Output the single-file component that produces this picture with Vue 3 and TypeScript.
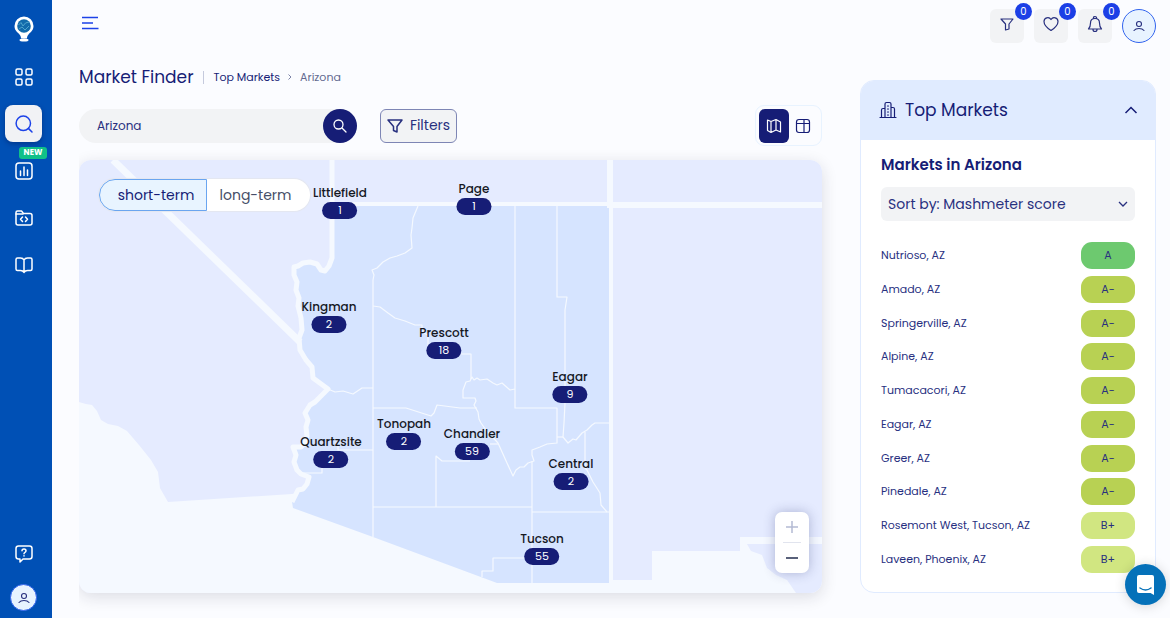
<script setup lang="ts">
import { computed, ref } from 'vue'

interface NavItem {
  label: string
  paths: string[]
  active?: boolean
  badge?: string
}

interface Pin {
  name: string
  count: number
  x: number
  y: number
}

interface Market {
  name: string
  grade: string
}

const nav: NavItem[] = [
  {
    label: 'Dashboard',
    paths: ['M2 3.5Q2 2 3.5 2H6.5Q8 2 8 3.5V6.5Q8 8 6.5 8H3.5Q2 8 2 6.5Z', 'M12 3.5Q12 2 13.5 2H16.5Q18 2 18 3.5V6.5Q18 8 16.5 8H13.5Q12 8 12 6.5Z', 'M2 13.5Q2 12 3.5 12H6.5Q8 12 8 13.5V16.5Q8 18 6.5 18H3.5Q2 18 2 16.5Z', 'M12 13.5Q12 12 13.5 12H16.5Q18 12 18 13.5V16.5Q18 18 16.5 18H13.5Q12 18 12 16.5Z'],
  },
  { label: 'Search', active: true, paths: ['M16.5 9.3a7.2 7.2 0 1 1-14.4 0a7.2 7.2 0 0 1 14.4 0', 'M14.6 14.6L18 18'] },
  { label: 'Analytics', badge: 'NEW', paths: ['M5 2H15Q18 2 18 5V15Q18 18 15 18H5Q2 18 2 15V5Q2 2 5 2Z', 'M6.5 10V14.5', 'M10 6V14.5', 'M13.5 9V14.5'] },
  { label: 'Projects', paths: ['M2 15V4.5Q2 3 3.5 3H7.5L9.5 5.5H16Q18 5.5 18 7.5V15Q18 17 16 17H4Q2 17 2 15Z', 'M2 6H9', 'M8.5 9L6.5 11.2L8.5 13.4', 'M11.5 9L13.5 11.2L11.5 13.4'] },
  { label: 'Guides', paths: ['M10 5Q9 3 6.5 3H3.5Q2 3 2 4.5V14Q2 15.5 3.5 15.5H6.5Q9 15.5 10 17.5Q11 15.5 13.5 15.5H16.5Q18 15.5 18 14V4.5Q18 3 16.5 3H13.5Q11 3 10 5V17'] },
]

const mapBox = { x: 79, y: 160, width: 743, height: 433 }

const pins: Pin[] = [
  { name: 'Littlefield', count: 1, x: 340, y: 219 },
  { name: 'Page', count: 1, x: 474, y: 215 },
  { name: 'Kingman', count: 2, x: 329, y: 333 },
  { name: 'Prescott', count: 18, x: 444, y: 359 },
  { name: 'Eagar', count: 9, x: 570, y: 403 },
  { name: 'Tonopah', count: 2, x: 404, y: 450 },
  { name: 'Chandler', count: 59, x: 472, y: 460 },
  { name: 'Quartzsite', count: 2, x: 331, y: 468 },
  { name: 'Central', count: 2, x: 571, y: 490 },
  { name: 'Tucson', count: 55, x: 542, y: 565 },
]

const placedPins = computed(() =>
  pins.map((pin) => ({
    ...pin,
    style: {
      left: `${((pin.x - mapBox.x) / mapBox.width) * 100}%`,
      top: `${((pin.y - mapBox.y) / mapBox.height) * 100}%`,
    },
  })),
)

const arizona =
  'M333 205L332 258L329 266L325 272L321 271L317 264L310 262L303 263L298 266L293 267L294 275L297 282L296 290L299 298L298 306L301 318L302 330L300 340L300 350L306 360L312 367L313 378L328 389L321 396L315 402L310 405L305 413L308 420L307 427L307 436L305 443L301 447L293 447L296 455L294 462L297 470L301 474L309 477L308 484L304 488L298 489L292 502L293 508L373 537L497 583H610V205Z'

const stateBorder =
  'M332 160V258L329 266L325 271L321 270L317 264L310 262L303 263L298 266L294 267L294 275L297 282L296 290L299 298L298 306L301 318L302 330L299 338L300 350L306 360L312 367L313 378L328 389L321 396L315 402L310 405L305 413L308 420L306 427L307 436L305 443L301 447L293 447L296 455L294 462L297 470L301 474L309 477L307 484L303 489L298 490L292 502'

const counties = [
  'M418 206L413 218L412 228L411 235L412 248L405 253L397 256L390 258L383 262L377 268L372 270L374 275L373 280V537',
  'M373 306L380 307L388 313L395 318L405 321L415 325H422V332L428 335V350L462 354H471V379',
  'M515 389L510 390L502 383L497 385L493 383L487 379L480 380L477 378L474 380L472 377L470 381L466 382L463 390V398H475L476 401L474 405L478 412L479 419L481 423L486 430L498 443L507 463L513 476L516 470L520 467L524 467L528 463L534 461L532 455V450L540 447L547 444L557 443V408H515V206',
  'M557 206V297H567L565 310V403L564 423L563 437L568 443L573 439L576 440L582 433L587 430L592 425L595 423H610',
  'M557 437H563',
  'M585 432V468L587 470L593 482L600 493L601 505L607 512',
  'M532 461V583',
  'M532 512H610',
  'M373 507H532',
  'M436 507V456L442 461H470',
  'M373 408H406L431 416L434 413L437 405L460 408H477',
  'M490 444H498',
  'M328 389L335 392L343 391L353 394L362 388H373',
  'M373 450H338V443',
  'M322 465V473H297',
  'M482 577V571H493V558H532',
]

const markets: Market[] = [
  { name: 'Nutrioso, AZ', grade: 'A' },
  { name: 'Amado, AZ', grade: 'A-' },
  { name: 'Springerville, AZ', grade: 'A-' },
  { name: 'Alpine, AZ', grade: 'A-' },
  { name: 'Tumacacori, AZ', grade: 'A-' },
  { name: 'Eagar, AZ', grade: 'A-' },
  { name: 'Greer, AZ', grade: 'A-' },
  { name: 'Pinedale, AZ', grade: 'A-' },
  { name: 'Rosemont West, Tucson, AZ', grade: 'B+' },
  { name: 'Laveen, Phoenix, AZ', grade: 'B+' },
]

const gradeClass: Record<string, string> = { A: 'top', 'A-': 'high', 'B+': 'good' }

const query = ref('Arizona')
const term = ref<'short' | 'long'>('short')
const view = ref<'map' | 'table'>('map')
const panelOpen = ref(true)
</script>

<template>
  <div class="app">
    <aside class="sidebar">
      <a class="logo" href="#" aria-label="Home">
        <svg width="20" height="26" viewBox="0 0 20 26">
          <path d="M10 0.5a9.5 9.5 0 0 1 9.5 9.5c0 4.500-3 6-5 8.500c-1.200 1.500-1.500 2.500-1.500 4H7c0-1.500-.3-2.500-1.500-4C3.500 16 .5 14.500 .5 10A9.5 9.5 0 0 1 10 .5Z" fill="#fff" />
          <ellipse cx="10" cy="24" rx="4.5" ry="1.5" fill="#fff" />
          <circle cx="10" cy="10" r="6.8" fill="#126bab" />
          <path d="M4.500 9L7 6.500L9 10L11.500 7L15 6M5 13L8 11L11 14L15 10" fill="none" stroke="#4fa5cc" stroke-width="1" />
        </svg>
      </a>
      <nav class="nav" aria-label="Main">
        <a v-for="item in nav" :key="item.label" class="nav-item" :class="{ active: item.active }" href="#" :aria-label="item.label">
          <svg class="line-icon" width="20" height="20" viewBox="0 0 20 20">
            <path v-for="d in item.paths" :key="d" :d="d" />
          </svg>
          <span v-if="item.badge" class="new-badge">{{ item.badge }}</span>
        </a>
      </nav>
      <div class="sidebar-foot">
        <a class="nav-item" href="#" aria-label="Help">
          <svg class="line-icon" width="20" height="20" viewBox="0 0 20 20">
            <path d="M4.5 2H15.5Q18 2 18 4.5V12.5Q18 15 15.5 15H9L6 18V15H4.5Q2 15 2 12.5V4.5Q2 2 4.5 2Z" />
            <path d="M8 6.8Q8 5 10 5T12 6.8Q12 7.800 11 8.3T10 9.8M10 11.8V12" />
          </svg>
        </a>
        <button class="avatar small" type="button" aria-label="Account">
          <svg class="line-icon" width="14" height="14" viewBox="0 0 14 14">
            <circle cx="7" cy="5" r="2.5" />
            <path d="M2 11.500Q3.500 9.500 7 9.500T12 11.500" />
          </svg>
        </button>
      </div>
    </aside>

    <div class="content">
      <header class="topbar">
        <button class="menu" type="button" aria-label="Toggle menu">
          <svg width="18" height="14" viewBox="0 0 18 14" fill="none" stroke="#1c42e8" stroke-width="1.6">
            <path d="M1 1.500H17M1 7H12M1 12.500H17.500" />
          </svg>
        </button>
        <div class="actions">
          <button class="action" type="button" aria-label="Saved filters">
            <svg class="line-icon" width="16" height="16" viewBox="0 0 16 16"><path d="M2 3H14L10 8V13L6.5 14V8Z" /></svg>
            <span class="count">0</span>
          </button>
          <button class="action" type="button" aria-label="Favorites">
            <svg class="line-icon" width="18" height="18" viewBox="0 0 18 18"><path d="M9 15.500Q2 11 2 6.500A3.8 3.8 0 0 1 9 4.500A3.8 3.8 0 0 1 16 6.500Q16 11 9 15.500Z" /></svg>
            <span class="count">0</span>
          </button>
          <button class="action" type="button" aria-label="Notifications">
            <svg class="line-icon" width="18" height="18" viewBox="0 0 18 18"><path d="M2.5 14Q4.5 12 4.5 8Q4.5 3.500 9 3.500T13.500 8Q13.500 12 15.500 14ZM7.500 3.500V2.500Q7.500 1.500 9 1.500T10.500 2.500V3.500M7 14.500Q7 16.500 9 16.500T11 14.500" /></svg>
            <span class="count">0</span>
          </button>
          <button class="avatar" type="button" aria-label="Account">
            <svg class="line-icon" width="14" height="14" viewBox="0 0 14 14">
              <circle cx="7" cy="5" r="2.5" />
              <path d="M2 11.500Q3.500 9.500 7 9.500T12 11.500" />
            </svg>
          </button>
        </div>
      </header>

      <div class="columns">
        <main class="finder">
          <div class="heading">
            <h1>Market Finder</h1>
            <nav class="crumbs" aria-label="Breadcrumb">
              <a href="#">Top Markets</a>
              <svg width="4" height="6" viewBox="0 0 4 6" fill="none" stroke="#7d84a8"><path d="M.5 .5L3 3L.5 5.500" /></svg>
              <span>Arizona</span>
            </nav>
          </div>

          <div class="toolbar">
            <form class="search" @submit.prevent>
              <input v-model="query" type="text" aria-label="Search markets" />
              <button type="submit" aria-label="Search">
                <svg width="16" height="16" viewBox="0 0 16 16" fill="none" stroke="#fff" stroke-width="1.3" stroke-linecap="round">
                  <circle cx="6.5" cy="6.5" r="4.5" />
                  <path d="M10 10L14 14" />
                </svg>
              </button>
            </form>
            <button class="filters" type="button">
              <svg class="line-icon" width="16" height="16" viewBox="0 0 16 16"><path d="M1 2H15L10 8.500V14L6.500 12.500V8.500Z" /></svg>
              Filters
            </button>
            <div class="views">
              <button type="button" aria-label="Map view" :class="{ on: view === 'map' }" @click="view = 'map'">
                <svg class="line-icon" width="16" height="16" viewBox="0 0 16 16"><path d="M1.500 2L5 3.500L10 1.500L14.500 4V14L10 12L5 14.500L1.500 12.500ZM5 3.500V14.500M10 1.500V12" /></svg>
              </button>
              <button type="button" aria-label="Table view" :class="{ on: view === 'table' }" @click="view = 'table'">
                <svg class="line-icon" width="16" height="16" viewBox="0 0 16 16"><path d="M4 1.500H12Q14.500 1.500 14.500 4V12Q14.500 14.500 12 14.500H4Q1.500 14.500 1.500 12V4Q1.500 1.500 4 1.500ZM1.500 5.500H14.500M9 1.500V14.500" /></svg>
              </button>
            </div>
          </div>

          <section class="map" aria-label="Market map">
            <svg class="map-art" viewBox="79 160 743 433" preserveAspectRatio="none">
              <rect x="79" y="160" width="743" height="433" fill="#e5ebff" />
              <path d="M79 402L86 404L92 405L97 411L101 420L108 424L118 426L127 431L139 445L151 460L158 472L160 488L168 502L292 494L400 480H613V580H652V551H740V537H822V544H747L751 551L762 555L767 568L776 575L787 580L796 593H79Z" fill="#f5f9ff" />
              <path :d="arizona" fill="#d6e4ff" />
              <path d="M113 160L300 342" stroke="#f5f9ff" stroke-width="7" fill="none" />
              <path :d="stateBorder" stroke="#f5f9ff" stroke-width="5" stroke-linejoin="round" fill="none" />
              <path d="M335 204H610M611 583V206" stroke="#f5f9ff" stroke-width="4" fill="none" />
              <path d="M610 160V208M607 205H822" stroke="#f5f9ff" stroke-width="6" fill="none" />
              <path v-for="d in counties" :key="d" :d="d" stroke="#f5f9ff" stroke-width="1.2" stroke-linejoin="round" fill="none" />
            </svg>

            <div v-for="pin in placedPins" :key="pin.name" class="pin" :style="pin.style">
              <span class="pin-name">{{ pin.name }}</span>
              <button class="pin-count" type="button" :aria-label="`${pin.count} markets near ${pin.name}`">{{ pin.count }}</button>
            </div>

            <div class="terms">
              <button type="button" :class="{ on: term === 'short' }" @click="term = 'short'">short-term</button>
              <button type="button" :class="{ on: term === 'long' }" @click="term = 'long'">long-term</button>
            </div>

            <div class="zoom">
              <button type="button" aria-label="Zoom in">
                <svg width="14" height="14" viewBox="0 0 14 14" stroke="#b4bad3" stroke-width="1.5"><path d="M1 7H13M7 1V13" /></svg>
              </button>
              <button type="button" aria-label="Zoom out">
                <svg width="14" height="14" viewBox="0 0 14 14" stroke="#59617a" stroke-width="2"><path d="M1 7H13" /></svg>
              </button>
            </div>
          </section>
        </main>

        <section class="panel">
          <h2>
            <button class="panel-head" type="button" :aria-expanded="panelOpen" @click="panelOpen = !panelOpen">
              <svg class="line-icon" width="18" height="18" viewBox="0 0 18 18"><path d="M1 16.500H17M6 16.500V3Q6 1.500 7.500 1.500H10.500Q12 1.500 12 3V16.500M6 7.500H4Q2.500 7.500 2.500 9V16.500M12 6.500H14Q15.500 6.500 15.500 8V16.500M8.500 5H9.500M8.500 8H9.500M8.500 11H9.500M8.500 14H9.500" /></svg>
              <span>Top Markets</span>
              <svg class="chevron" width="14" height="8" viewBox="0 0 14 8"><path d="M1.500 7L7 1.500L12.500 7" /></svg>
            </button>
          </h2>
          <div v-if="panelOpen" class="panel-body">
            <h3>Markets in Arizona</h3>
            <div class="sort">
              <select aria-label="Sort markets">
                <option>Sort by: Mashmeter score</option>
              </select>
              <svg width="10" height="6" viewBox="0 0 10 6"><path d="M1 1L5 5L9 1" /></svg>
            </div>
            <ul class="markets">
              <li v-for="market in markets" :key="market.name">
                <span>{{ market.name }}</span>
                <span class="grade" :class="gradeClass[market.grade]">{{ market.grade }}</span>
              </li>
            </ul>
          </div>
        </section>
      </div>
    </div>

    <button class="chat" type="button" aria-label="Open chat">
      <svg width="20" height="22" viewBox="0 0 20 22">
        <path d="M3 1H16Q18 1 18 3V21L14.500 19H3Q1 19 1 17V3Q1 1 3 1Z" fill="#fff" />
        <path d="M4 14Q9.500 18 15 14" fill="none" stroke="#0571b9" stroke-width="1.5" stroke-linecap="round" />
      </svg>
    </button>
  </div>
</template>

<style>
body {
  background: #fbfcff;
}
</style>

<style scoped>
.app {
  display: flex;
  min-height: 100vh;
  font-family: Poppins, Inter, "Noto Sans", sans-serif;
  color: #161d76;
}

.app *,
.app *::before {
  box-sizing: border-box;
}

button,
input,
select {
  font: inherit;
  color: inherit;
  border: 0;
  padding: 0;
  margin: 0;
  background: none;
}

button,
select {
  cursor: pointer;
}

a {
  color: inherit;
  text-decoration: none;
}

h1,
h2,
h3,
ul {
  margin: 0;
  padding: 0;
  font-weight: 400;
  list-style: none;
}

svg {
  display: block;
  flex: none;
}

.line-icon {
  fill: none;
  stroke: currentColor;
  stroke-width: 1.5;
  stroke-linecap: round;
  stroke-linejoin: round;
}

.sidebar {
  position: sticky;
  top: 0;
  display: flex;
  flex-direction: column;
  flex: none;
  width: 52px;
  height: 100vh;
  padding: 16px 10px 7px 5px;
  background: #0050b5;
  color: #fff;
}

.logo {
  display: flex;
  justify-content: center;
  margin-bottom: 16px;
}

.nav {
  display: flex;
  flex-direction: column;
  gap: 10px;
}

.nav-item {
  position: relative;
  display: flex;
  align-items: center;
  justify-content: center;
  width: 37px;
  height: 37px;
  border-radius: 8px;
}

.nav-item.active {
  background: #f1f2f5;
  color: #1c42e8;
  box-shadow: 0 2px 5px rgba(0, 20, 80, 0.4);
}

.new-badge {
  position: absolute;
  top: -5px;
  right: -5px;
  width: 28px;
  border-radius: 3px;
  background: #10c088;
  font-size: 8px;
  line-height: 12px;
  font-weight: 700;
  text-align: center;
}

.sidebar-foot {
  display: flex;
  flex-direction: column;
  align-items: center;
  gap: 12px;
  margin-top: auto;
}

.avatar {
  display: flex;
  align-items: center;
  justify-content: center;
  width: 34px;
  height: 34px;
  border: 1px solid #3264ee;
  border-radius: 50%;
  background: #e8f3ff;
  color: #28307f;
}

.avatar.small {
  width: 27px;
  height: 27px;
}

.avatar .line-icon {
  stroke-width: 1.1;
}

.content {
  flex: 1;
  min-width: 0;
  padding: 9px 14px 25px 27px;
}

.topbar {
  display: flex;
  align-items: center;
  justify-content: space-between;
}

.menu {
  margin: 0 0 6px 2px;
}

.actions {
  display: flex;
  gap: 10px;
}

.action {
  position: relative;
  display: flex;
  align-items: center;
  justify-content: center;
  width: 34px;
  height: 34px;
  padding-bottom: 4px;
  border-radius: 6px;
  background: #f2f3f5;
  color: #28307f;
}

.action .line-icon {
  stroke-width: 1.2;
}

.count {
  position: absolute;
  top: -6px;
  right: -8px;
  width: 17px;
  border-radius: 50%;
  background: #1c3fe6;
  color: #fff;
  font-size: 10px;
  line-height: 17px;
  text-align: center;
}

.columns {
  display: grid;
  grid-template-columns: minmax(0, 1fr) 296px;
  gap: 38px;
  padding-top: 22px;
}

.heading {
  display: flex;
  align-items: center;
  height: 24px;
}

h1 {
  font-size: 17px;
  line-height: 24px;
}

.crumbs {
  display: flex;
  align-items: center;
  gap: 8px;
  margin-left: 9px;
  padding-left: 10px;
  border-left: 1px solid #c5cadd;
  font-size: 11px;
  line-height: 13px;
}

.crumbs span {
  color: #62698f;
}

.toolbar {
  display: flex;
  align-items: center;
  height: 41px;
  margin: 16px 0 14px;
}

.search {
  display: flex;
  width: 278px;
  height: 34px;
  border-radius: 17px;
  background: #f2f3f5;
}

.search input {
  flex: 1;
  min-width: 0;
  padding: 0 18px;
  border-radius: 17px;
  color: #28307f;
  font-size: 12px;
}

.search button {
  display: flex;
  align-items: center;
  justify-content: center;
  width: 34px;
  border-radius: 50%;
  background: #161d76;
}

.filters {
  display: flex;
  align-items: center;
  justify-content: center;
  gap: 7px;
  width: 77px;
  height: 34px;
  margin-left: 23px;
  border: 1px solid #7e86b5;
  border-radius: 6px;
  background: #f2f3f5;
  color: #28307f;
  font-size: 14px;
}

.views {
  display: flex;
  align-items: center;
  width: 67px;
  height: 41px;
  margin-left: auto;
  padding: 0 3px;
  border: 1px solid #e8f3ff;
  border-radius: 9px;
}

.views button {
  display: flex;
  align-items: center;
  justify-content: center;
  width: 30px;
  height: 34px;
  border-radius: 6px;
}

.views .on {
  background: #161d76;
  color: #fff;
}

.views .line-icon {
  stroke-width: 1.2;
}

.map {
  position: relative;
  aspect-ratio: 743 / 433;
  border-radius: 12px;
  box-shadow: 0 4px 16px rgba(30, 30, 60, 0.14);
  clip-path: inset(-20px -20px -24px 0);
}

.map-art {
  width: 100%;
  height: 100%;
  border-radius: 12px;
}

.pin {
  position: absolute;
  display: flex;
  flex-direction: column;
  align-items: center;
  transform: translate(-50%, -100%);
}

.pin-name {
  color: #15181f;
  font-size: 12px;
  line-height: 19px;
  font-weight: 500;
}

.pin-count {
  width: 35px;
  border-radius: 9px;
  background: #161d76;
  color: #fff;
  font-size: 11px;
  line-height: 17px;
}

.terms {
  position: absolute;
  top: 19px;
  left: 20px;
  display: flex;
  height: 32px;
  border-radius: 16px;
  background: #fff;
  box-shadow: 0 0 1px 1px #e4e7f0;
}

.terms button {
  width: 103px;
  padding-right: 6px;
  border-radius: 0 16px 16px 0;
  color: #464e68;
  font-size: 14px;
}

.terms button:first-child {
  width: 108px;
  padding: 0 0 0 6px;
  border-radius: 16px 0 0 16px;
}

.terms .on {
  border: 1px solid #6aa5f0;
  background: #e8f4ff;
  color: #161d76;
}

.zoom {
  position: absolute;
  right: 13px;
  bottom: 20px;
  display: flex;
  flex-direction: column;
  width: 34px;
  border-radius: 7px;
  background: #fff;
  box-shadow: 0 0 12px rgba(40, 50, 110, 0.3);
}

.zoom button {
  display: flex;
  align-items: center;
  justify-content: center;
  height: 30px;
  margin: 0 8px;
}

.zoom button:first-child {
  height: 31px;
  border-bottom: 1px solid #e1e4ee;
}

.panel {
  display: flex;
  flex-direction: column;
  margin-top: 15px;
  border: 1px solid #e0ebff;
  border-radius: 14px;
  background: #fff;
}

.panel-head {
  display: flex;
  align-items: center;
  gap: 8px;
  width: 100%;
  height: 59px;
  padding: 0 17px 2px 18px;
  border-radius: 13px 13px 0 0;
  background: #e0ebff;
  font-size: 17px;
}

.panel-head .line-icon {
  stroke-width: 1.2;
}

.chevron {
  margin-left: auto;
  fill: none;
  stroke: currentColor;
  stroke-width: 1.5;
}

.panel-body {
  display: flex;
  flex: 1;
  flex-direction: column;
  padding: 13px 20px 19px;
}

h3 {
  font-size: 15px;
  line-height: 24px;
  font-weight: 600;
}

.sort {
  position: relative;
  margin: 10px 0 21px;
}

.sort select {
  width: 100%;
  height: 34px;
  padding: 0 24px 0 7px;
  border-radius: 6px;
  appearance: none;
  background: #f2f3f5;
  color: #28307f;
  font-size: 14px;
}

.sort svg {
  position: absolute;
  top: 14px;
  right: 7px;
  fill: none;
  stroke: #28307f;
  stroke-width: 1.3;
  pointer-events: none;
}

.markets {
  display: flex;
  flex: 1;
  flex-direction: column;
  justify-content: space-between;
  gap: 6px;
  color: #28307f;
  font-size: 11px;
}

.markets li {
  display: flex;
  align-items: center;
  justify-content: space-between;
}

.grade {
  width: 54px;
  border-radius: 11px;
  line-height: 27px;
  text-align: center;
}

.grade.top {
  background: #6dc96f;
}

.grade.high {
  background: #b8d153;
}

.grade.good {
  background: #d1e681;
}

.chat {
  position: fixed;
  right: 4px;
  bottom: 13px;
  display: flex;
  align-items: center;
  justify-content: center;
  width: 41px;
  height: 41px;
  border-radius: 50%;
  background: #0571b9;
  box-shadow: 0 1px 12px rgba(0, 0, 0, 0.16);
}
</style>
